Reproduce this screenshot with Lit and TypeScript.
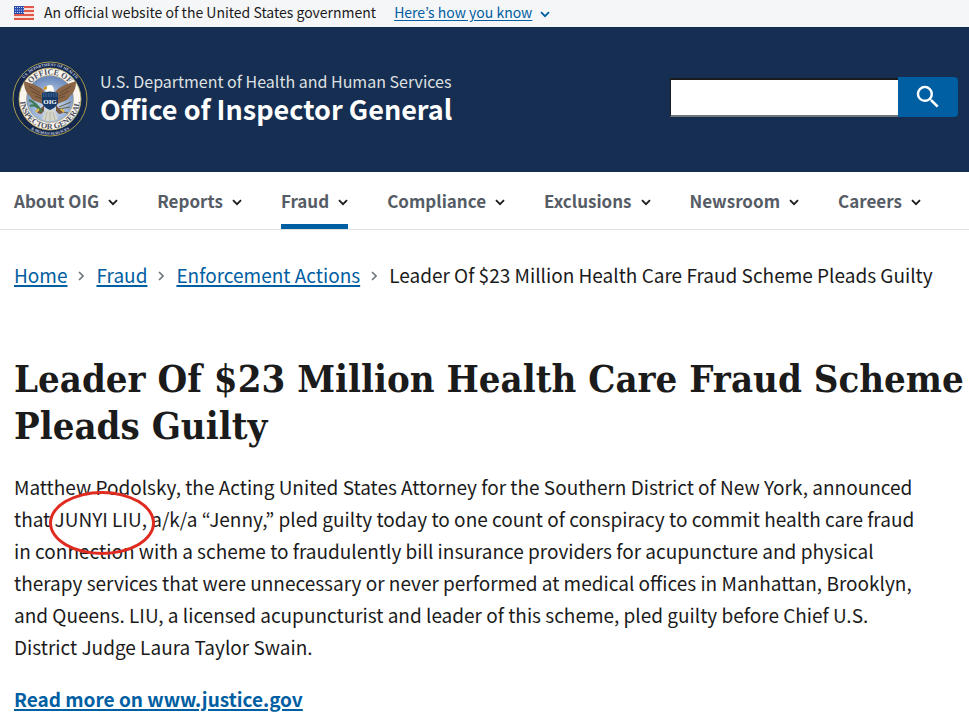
import { LitElement, html, svg, css } from "lit";
import { customElement } from "lit/decorators.js";
import { classMap } from "lit/directives/class-map.js";

const NAV = ["About OIG", "Reports", "Fraud", "Compliance", "Exclusions", "Newsroom", "Careers"];
const CRUMBS = ["Home", "Fraud", "Enforcement Actions"];
const TITLE = "Leader Of $23 Million Health Care Fraud Scheme Pleads Guilty";

const chevron = html`<svg class="chevron" viewBox="0 0 10 7" aria-hidden="true">
  <path d="M1 1.2 5 5.2 9 1.2" fill="none" stroke="currentColor" stroke-width="1.8" />
</svg>`;

@customElement("oig-seal")
export class OigSeal extends LitElement {
  static styles = css`
    :host { display: block; flex: none; width: 76px; height: 76px; }
    svg { display: block; width: 100%; height: 100%; }
    .ring { font-family: "Liberation Serif", serif; font-weight: 700; }
    .outer { font-size: 4px; fill: #c9d3e6; }
    .inner { font-size: 8px; fill: #4a4c5c; }
    .name { font: 700 7px "Liberation Serif", serif; fill: #ffffff; }
  `;
  render() {
    return html`<svg viewBox="0 0 76 76" role="img" aria-label="Office of Inspector General seal">
      <defs>
        <radialGradient id="sky" cx="50%" cy="65%" r="60%">
          <stop offset="0" stop-color="#dde7f3" />
          <stop offset="0.5" stop-color="#a9bfdd" />
          <stop offset="1" stop-color="#6d8cbd" />
        </radialGradient>
        <path id="outer-top" d="M5 38A33 33 0 0 1 71 38" />
        <path id="outer-low" d="M2.2 38A35.8 35.8 0 0 0 73.8 38" />
        <path id="inner-top" d="M13.5 38A24.5 24.5 0 0 1 62.5 38" />
        <path id="inner-low" d="M12 23A30 30 0 1 0 64 23" />
      </defs>
      <circle cx="38" cy="38" r="37" fill="#13264b" stroke="#a79c4c" stroke-width="1" />
      <circle cx="38" cy="38" r="31" fill="#f7f5ee" stroke="#b7a95b" stroke-width="0.8" />
      <circle cx="38" cy="38" r="23.5" fill="url(#sky)" stroke="#a99f72" stroke-width="0.6" />
      <text class="ring outer"><textPath href="#outer-top" startOffset="50%" text-anchor="middle">U.S. DEPARTMENT OF HEALTH</textPath></text>
      <text class="ring outer"><textPath href="#outer-low" startOffset="50%" text-anchor="middle">&amp; HUMAN SERVICES</textPath></text>
      <text class="ring inner"><textPath href="#inner-top" startOffset="50%" text-anchor="middle">OFFICE OF</textPath></text>
      <text class="ring inner"><textPath href="#inner-low" startOffset="50%" text-anchor="middle">INSPECTOR GENERAL</textPath></text>
      ${svg`
        <path d="M34 33C30 26 24 24 12 20c0 7 2 12 6 15 1 3 4 5 8 6l7 3z" fill="#8a6546" />
        <path d="M42 33C46 26 52 24 64 20c0 7-2 12-6 15-1 3-4 5-8 6l-7 3z" fill="#8a6546" />
        <path d="M17 25l11 7M19 30l10 5M23 35l8 3M59 25l-11 7M57 30l-10 5M53 35l-8 3" stroke="#5f4430" stroke-width="0.9" />
        <path d="M32 44L25 52l4 1 3-3zM44 44l7 8-4 1-3-3z" fill="#76533a" />
        <path d="M34 49l-4 9c5 3 11 3 16 0L42 49z" fill="#d6d5ca" />
        <path d="M35 51l-2 8M38 51v9M41 51l2 8" stroke="#a9a99f" stroke-width="0.7" />
        <path d="M34 32c-1-5 0-8 4-8 3 0 4 2 4 8z" fill="#fffdf2" />
        <path d="M35 25l-4 2 1 2 3-1z" fill="#d99a28" />
        <path d="M17 39c5 2 9 6 13 12M18 45c4-2 8 1 11 5" fill="none" stroke="#3f7a55" stroke-width="2.2" />
        <path d="M47 46l12-5M47 48l11-2M47 50l9 2" stroke="#625a3b" stroke-width="1" />
        <path d="M27 48l-3 3M49 48l3 3" stroke="#e2b23c" stroke-width="2" />
        <path d="M30 32q8-3 16 0v10q-2 5-8 7-6-2-8-7z" fill="#183a68" />
        <path d="M31 33h14M31 35h14" stroke="#5f8bb5" stroke-width="0.8" stroke-dasharray="1.5 1" />
      `}
      <text class="name" x="38" y="43" text-anchor="middle">OIG</text>
    </svg>`;
  }
}

@customElement("app-root")
export class AppRoot extends LitElement {
  static styles = css`
    :host {
      display: block;
      min-height: 100vh;
      background: #ffffff;
      color: #1b1b1b;
      font-family: "Noto Sans CJK KR", "Open Sans", sans-serif;
      font-size: 19px;
      line-height: 32px;
    }
    * { box-sizing: border-box; }
    a { color: #005ea2; text-decoration-thickness: 2px; text-underline-offset: 2px; }
    .chevron { width: 10px; height: 7px; flex: none; }

    .banner { display: flex; align-items: center; height: 27px; padding: 0 14px 3px; background: #f5f6f7; font-size: 14px; line-height: 24px; }
    .flag { width: 20px; height: 14px; margin: 2px 10px 0 0; flex: none; }
    .know { display: flex; align-items: center; gap: 8px; margin-left: 18px; padding: 0; border: 0; background: none; color: #005ea2; font: inherit; }
    .know-text { text-decoration: underline; text-underline-offset: 2px; }
    .know .chevron { margin-top: 4px; }

    .masthead { display: flex; justify-content: space-between; align-items: center; height: 145px; padding: 0 11px 2px 12px; background: #162e51; color: #ffffff; }
    .brand { display: flex; align-items: center; gap: 12px; color: inherit; text-decoration: none; }
    .brand-text { padding-bottom: 4px; }
    .dept { display: block; color: #dfe1e2; font-size: 16px; line-height: 24px; }
    .office { display: block; font-size: 27px; font-weight: 700; line-height: 32px; }
    .search { display: flex; height: 40px; margin-bottom: 4px; }
    .field { width: 228px; height: 39px; margin-top: 1px; padding: 0 8px; border: 2px solid; border-color: #1b1b1b #1b1b1b #71767a #1b1b1b; border-width: 2px 0 2px 1px; border-radius: 0; background: #ffffff; font: inherit; }
    .go { display: grid; place-items: center; width: 60px; padding: 0; border: 0; border-radius: 0 4px 4px 0; background: #005ea2; color: #ffffff; }
    .glass { width: 30px; height: 30px; }

    .nav { display: flex; height: 58px; padding: 0 14px; gap: 39px; border-bottom: 1px solid #dfe1e2; }
    .item { display: flex; align-items: center; gap: 9px; padding: 5px 0 0; border: 0; border-bottom: 5px solid transparent; border-radius: 0; background: none; color: #1b1b1b; font: inherit; font-size: 17px; font-weight: 700; white-space: nowrap; }
    .item.current { border-bottom-color: #005ea2; }
    .label { color: #565c65; }
    .item .chevron { margin-top: 4px; }

    .crumbs { display: flex; flex-wrap: wrap; margin: 0; padding: 29px 14px 0; list-style: none; }
    .crumb { display: flex; align-items: center; }
    .sep { width: 6px; height: 10px; margin: 2px 12px 0 11px; color: #71767a; }

    .content { padding-left: 14px; }
    .title { margin: 64px 0 0; font-family: "DejaVu Serif Condensed", "DejaVu Serif", serif; font-size: 38px; font-weight: 700; line-height: 47px; }
    .summary { max-width: 912px; margin: 22px 0 0; }
    .marked { position: relative; }
    .oval { position: absolute; left: -6px; top: -14px; width: 106px; height: 64px; border: 3px solid #e02b20; border-radius: 50%; }
    .more { margin: 20px 0 0; font-weight: 700; }
  `;

  render() {
    return html`
      <section class="banner" aria-label="Official website notice">
        <svg class="flag" viewBox="0 0 20 14" aria-hidden="true">
          <rect width="20" height="14" fill="#f7dfd9" />
          <path d="M0 1h20M0 5h20M0 9h20M0 13h20" stroke="#e0584a" stroke-width="2" />
          <rect width="10" height="8" fill="#2b4fb0" />
          <path d="M1 1.5h9M1 4h9M1 6.5h9" stroke="#c7d3f0" stroke-width="1" stroke-dasharray="1 1" />
        </svg>
        <span>An official website of the United States government</span>
        <button class="know" type="button"><span class="know-text">Here’s how you know</span>${chevron}</button>
      </section>
      <header class="masthead">
        <a class="brand" href="#">
          <oig-seal></oig-seal>
          <span class="brand-text">
            <span class="dept">U.S. Department of Health and Human Services</span>
            <span class="office">Office of Inspector General</span>
          </span>
        </a>
        <form class="search" role="search">
          <input class="field" type="search" aria-label="Search" />
          <button class="go" type="button" aria-label="Submit search">
            <svg class="glass" viewBox="0 0 24 24" fill="currentColor" aria-hidden="true">
              <path d="M15.5 14h-.79l-.28-.27A6.47 6.47 0 0 0 16 9.5 6.5 6.5 0 1 0 9.5 16c1.61 0 3.09-.59 4.23-1.57l.27.28v.79l5 4.99L20.49 19l-4.99-5zm-6 0C7.01 14 5 11.99 5 9.5S7.01 5 9.5 5 14 7.01 14 9.5 11.99 14 9.5 14z" />
            </svg>
          </button>
        </form>
      </header>
      <nav class="nav" aria-label="Primary">
        ${NAV.map((name) => html`<button type="button" class=${classMap({ item: true, current: name === "Fraud" })}><span class="label">${name}</span>${chevron}</button>`)}
      </nav>
      <nav aria-label="Breadcrumbs">
        <ol class="crumbs">
          ${CRUMBS.map((name) => html`<li class="crumb"><a href="#">${name}</a><svg class="sep" viewBox="0 0 6 10" aria-hidden="true"><path d="M1 1l4 4-4 4" fill="none" stroke="currentColor" stroke-width="1.6" /></svg></li>`)}
          <li class="crumb" aria-current="page">${TITLE}</li>
        </ol>
      </nav>
      <main class="content">
        <h1 class="title">${TITLE}</h1>
        <p class="summary">Matthew Podolsky, the Acting United States Attorney for the Southern District of New York, announced that <span class="marked">JUNYI LIU<span class="oval"></span></span>, a/k/a “Jenny,” pled guilty today to one count of conspiracy to commit health care fraud in connection with a scheme to fraudulently bill insurance providers for acupuncture and physical therapy services that were unnecessary or never performed at medical offices in Manhattan, Brooklyn, and Queens. LIU, a licensed acupuncturist and leader of this scheme, pled guilty before Chief U.S. District Judge Laura Taylor Swain.</p>
        <p class="more"><a href="#">Read more on www.justice.gov</a></p>
      </main>
    `;
  }
}
